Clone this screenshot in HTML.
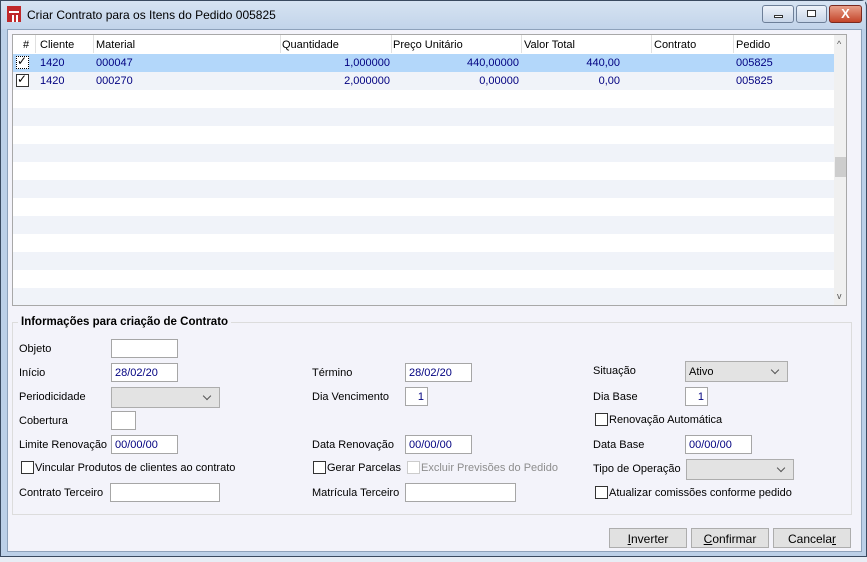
<!DOCTYPE html>
<html><head><meta charset="utf-8"><style>
*{box-sizing:border-box;margin:0;padding:0}
body{width:867px;height:562px;overflow:hidden;background:#c9d6e6;font-family:"Liberation Sans",sans-serif;font-size:11px;color:#000;position:relative}
.a{position:absolute}
.win{left:0;top:0;width:867px;height:557px;background:#bcd0e8;border:1px solid #3a4a60;border-radius:0 6px 0 0}
.title{left:1px;top:1px;width:864px;height:28px;background:linear-gradient(#d6e3f2,#c2d4ea)}
.client{left:7px;top:29px;width:855px;height:523px;background:#f3f3fa;border:1px solid #8ea2bb}
.grid{left:12px;top:34px;width:835px;height:272px;background:#fff;border:1px solid #a8a8a8;overflow:hidden}
.row{position:absolute;left:0;width:821px;height:18px}
.c{position:absolute;top:3px;white-space:nowrap}
.n{color:#000080}
.hd .c{top:4px}
.sep{position:absolute;top:0;width:1px;height:18px;background:#e0e0e0}
.lbl{position:absolute;white-space:nowrap}
.inp{position:absolute;height:19px;background:#fff;border:1px solid #a6a6a6;color:#000080;padding:3px 0 0 3px;font-size:11px}
.dd{position:absolute;height:21px;background:#e3e3e3;border:1px solid #adadad;padding:4px 0 0 3px}
.dd:after{content:"";position:absolute;right:9px;top:5px;width:5px;height:5px;border-right:1px solid #555;border-bottom:1px solid #555;transform:rotate(45deg)}
.cb{position:absolute;width:13px;height:13px;border:1px solid #333;background:#fff}
.btn{position:absolute;top:528px;height:20px;width:78px;background:#e1e1e1;border:1px solid #adadad;text-align:center;padding-top:3px;font-size:12px}
.wb{position:absolute;top:5px;height:18px;border:1px solid #6d7f98;border-radius:3px;background:linear-gradient(#eef3fa,#c7d5e8)}
</style></head><body>
<div class="a" style="left:0;top:553px;width:867px;height:9px;background:#e8edf5;border-top:1px solid #8aa"></div>
<div class="a win"></div>
<div class="a title"></div>
<div class="a" style="left:7px;top:6px;width:14px;height:16px;background:#c0282a"></div>
<div class="a" style="left:9px;top:11px;width:10px;height:2px;background:#fff"></div>
<div class="a" style="left:12px;top:15px;width:2px;height:7px;background:#fff"></div>
<div class="a" style="left:16px;top:15px;width:2px;height:7px;background:#fff"></div>
<div class="a" style="left:27px;top:8px;font-size:12px;color:#000">Criar Contrato para os Itens do Pedido 005825</div>
<div class="wb" style="left:762px;width:32px"><div class="a" style="left:11px;top:9px;width:9px;height:3px;border:1px solid #333;background:#fff"></div></div>
<div class="wb" style="left:796px;width:31px"><div class="a" style="left:10px;top:4px;width:9px;height:7px;border:1px solid #333;background:#fff"></div></div>
<div class="wb" style="left:829px;width:33px;background:linear-gradient(#e8a08a,#c4452a);border-color:#7a2a20;color:#fff;font-weight:bold;text-align:center;font-size:13px;line-height:16px">X</div>
<div class="a client"></div>

<div class="a grid">
 <div class="row hd" style="top:0;background:#fff">
  <div class="c" style="left:10px">#</div><div class="sep" style="left:22px"></div>
  <div class="c" style="left:27px">Cliente</div><div class="sep" style="left:80px"></div>
  <div class="c" style="left:83px">Material</div><div class="sep" style="left:267px"></div>
  <div class="c" style="left:269px">Quantidade</div><div class="sep" style="left:378px"></div>
  <div class="c" style="left:380px">Preço Unitário</div><div class="sep" style="left:508px"></div>
  <div class="c" style="left:511px">Valor Total</div><div class="sep" style="left:638px"></div>
  <div class="c" style="left:641px">Contrato</div><div class="sep" style="left:720px"></div>
  <div class="c" style="left:723px">Pedido</div>
 </div>
 <div class="row" style="top:19px;background:#b3d7fa">
  <div class="cb" style="left:3px;top:2px;border:1px dotted #000"></div><div class="c" style="left:4px;top:0;font-size:12px">✓</div>
  <div class="c n" style="left:27px">1420</div><div class="c n" style="left:83px">000047</div>
  <div class="c n" style="right:444px">1,000000</div><div class="c n" style="right:315px">440,00000</div>
  <div class="c n" style="right:214px">440,00</div><div class="c n" style="left:723px">005825</div>
 </div>
 <div class="row" style="top:37px;background:#f0f3f9">
  <div class="cb" style="left:3px;top:2px"></div><div class="c" style="left:4px;top:0;font-size:12px">✓</div>
  <div class="c n" style="left:27px">1420</div><div class="c n" style="left:83px">000270</div>
  <div class="c n" style="right:444px">2,000000</div><div class="c n" style="right:315px">0,00000</div>
  <div class="c n" style="right:214px">0,00</div><div class="c n" style="left:723px">005825</div>
 </div>
 <div class="row" style="top:73px;background:#f0f3f9"></div>
 <div class="row" style="top:109px;background:#f0f3f9"></div>
 <div class="row" style="top:145px;background:#f0f3f9"></div>
 <div class="row" style="top:181px;background:#f0f3f9"></div>
 <div class="row" style="top:217px;background:#f0f3f9"></div>
 <div class="row" style="top:253px;background:#f0f3f9"></div>
 <div class="a" style="left:821px;top:0;width:13px;height:272px;background:#f0f0f0"></div>
 <div class="a" style="left:824px;top:4px;font-size:9px;color:#555">^</div>
 <div class="a" style="left:822px;top:122px;width:12px;height:20px;background:#cdcdcd"></div>
 <div class="a" style="left:824px;top:256px;font-size:9px;color:#555">v</div>
</div>

<div class="a" style="left:12px;top:322px;width:840px;height:193px;border:1px solid #dcdcdc"></div>
<div class="a" style="left:18px;top:316px;background:#f3f3fa;padding:0 3px;font-weight:bold;font-size:11.5px">Informações para criação de Contrato</div>

<div class="lbl" style="left:19px;top:343px">Objeto</div><div class="inp" style="left:111px;top:339px;width:67px"></div>
<div class="lbl" style="left:19px;top:367px">Início</div><div class="inp" style="left:111px;top:363px;width:67px">28/02/20</div>
<div class="lbl" style="left:19px;top:391px">Periodicidade</div><div class="dd" style="left:111px;top:387px;width:109px"></div>
<div class="lbl" style="left:19px;top:415px">Cobertura</div><div class="inp" style="left:111px;top:411px;width:25px"></div>
<div class="lbl" style="left:19px;top:439px">Limite Renovação</div><div class="inp" style="left:111px;top:435px;width:67px">00/00/00</div>
<div class="cb" style="left:21px;top:461px"></div><div class="lbl" style="left:35px;top:462px">Vincular Produtos de clientes ao contrato</div>
<div class="lbl" style="left:19px;top:487px">Contrato Terceiro</div><div class="inp" style="left:110px;top:483px;width:110px"></div>

<div class="lbl" style="left:312px;top:367px">Término</div><div class="inp" style="left:405px;top:363px;width:67px">28/02/20</div>
<div class="lbl" style="left:312px;top:391px">Dia Vencimento</div><div class="inp" style="left:405px;top:387px;width:23px;text-align:right;padding-right:3px">1</div>
<div class="lbl" style="left:312px;top:439px">Data Renovação</div><div class="inp" style="left:405px;top:435px;width:67px">00/00/00</div>
<div class="cb" style="left:313px;top:461px"></div><div class="lbl" style="left:327px;top:462px">Gerar Parcelas</div>
<div class="cb" style="left:407px;top:461px;border-color:#ccc"></div><div class="lbl" style="left:421px;top:462px;color:#8d8d8d">Excluir Previsões do Pedido</div>
<div class="lbl" style="left:312px;top:487px">Matrícula Terceiro</div><div class="inp" style="left:405px;top:483px;width:111px"></div>

<div class="lbl" style="left:593px;top:365px">Situação</div><div class="dd" style="left:685px;top:361px;width:103px">Ativo</div>
<div class="lbl" style="left:593px;top:391px">Dia Base</div><div class="inp" style="left:685px;top:387px;width:23px;text-align:right;padding-right:3px">1</div>
<div class="cb" style="left:595px;top:413px"></div><div class="lbl" style="left:609px;top:414px">Renovação Automática</div>
<div class="lbl" style="left:593px;top:439px">Data Base</div><div class="inp" style="left:685px;top:435px;width:67px">00/00/00</div>
<div class="lbl" style="left:593px;top:463px">Tipo de Operação</div><div class="dd" style="left:686px;top:459px;width:108px"></div>
<div class="cb" style="left:595px;top:486px"></div><div class="lbl" style="left:609px;top:487px">Atualizar comissões conforme pedido</div>

<div class="btn" style="left:609px"><u>I</u>nverter</div>
<div class="btn" style="left:691px"><u>C</u>onfirmar</div>
<div class="btn" style="left:773px">Cancela<u>r</u></div>
</body></html>
